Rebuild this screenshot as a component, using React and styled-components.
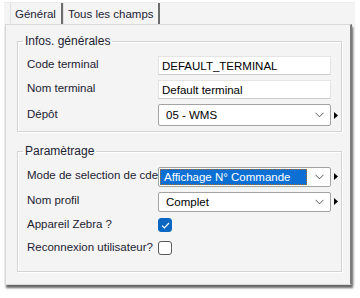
import React from 'react';
import styled, { createGlobalStyle } from 'styled-components';

const GlobalStyle = createGlobalStyle`
  html, body { margin: 0; padding: 0; background: #fff; }
  body { font-family: "Liberation Sans", Arial, sans-serif; font-size: 11.5px; }
`;

const Screen = styled.div`
  width: 360px;
  height: 298px;
  padding: 2px 0 0 4px;
  box-sizing: border-box;
  background: #fff;
`;

const Window = styled.div`
  width: 351px;
  height: 282px;
  background: #f4f4f4;
  border-top: 1px solid #ececec;
  display: flex;
  flex-direction: column;
`;

const TabStrip = styled.div`
  display: flex;
  height: 21px;
  padding-left: 6px;
`;

const Tab = styled.div`
  height: 21px;
  box-sizing: border-box;
  padding: 0 ${p => p.$pr}px 0 ${p => p.$pl}px;
  display: flex;
  align-items: center;
  color: #1c2233;
  border-left: 1px solid #e2e2e2;
  border-right: 2px solid #6c6c6c;
  background: #f4f4f4;
`;

const Page = styled.div`
  flex: 1;
  margin-left: 1px;
  width: 347px;
  box-sizing: border-box;
  border: 1px solid #dadada;
  border-right: 2px solid #7a7a7a;
  background: #f4f4f4;
  padding: 9px 0 0 11px;
  box-shadow: 1px 3px 2px rgba(0, 0, 0, 0.6);
  display: flex;
  flex-direction: column;
  gap: 12px;
`;

const Group = styled.fieldset`
  margin: 0;
  width: 325px;
  box-sizing: border-box;
  border: 1px solid #d4d4d4;
  box-shadow: inset 1px 1px 0 #fff, 1px 1px 0 #fff;
  padding: 6px 0 ${p => p.$pb}px 9px;
  display: flex;
  flex-direction: column;
`;

const Legend = styled.legend`
  margin-left: -4px;
  padding: 0 2px;
  font-size: 12px;
  line-height: 14px;
  color: #1c2233;
`;

const Row = styled.div`
  display: flex;
  align-items: center;
  height: ${p => p.$h}px;
`;

const Label = styled.div`
  width: 131px;
  flex: none;
  white-space: nowrap;
  overflow: hidden;
  color: #1c2233;
  margin-top: -3px;
`;

const TextInput = styled.div`
  width: 173px;
  height: 19px;
  box-sizing: border-box;
  background: #fff;
  border: 1px solid #e4e4e4;
  border-bottom-color: #cdcdcd;
  padding-left: 3px;
  display: flex;
  align-items: center;
  color: #000;
`;

const SelectBox = styled.div`
  width: 173px;
  height: ${p => p.$h}px;
  box-sizing: border-box;
  background: #fff;
  border: 1px solid #a3a3a3;
  border-radius: 2px;
  padding: 0 6px 0 1px;
  display: flex;
  align-items: center;
  justify-content: space-between;
  color: #000;
`;

const Value = styled.span`
  padding: 1px 3px;
  margin-left: 2px;
  border: 1px dotted transparent;
  ${p => p.$selected && `
    flex: 1;
    margin-left: 0;
    margin-right: 8px;
    background: #0b6fd4;
    color: #fff;
    border-color: #a86a2a;
  `}
`;

const Pointer = styled.div`
  width: 10px;
  display: flex;
  padding-left: 3px;
  box-sizing: border-box;
`;

const Check = styled.div`
  width: 14px;
  height: 14px;
  box-sizing: border-box;
  border-radius: 3px;
  display: flex;
  align-items: center;
  justify-content: center;
  background: ${p => (p.$on ? '#0a67c4' : '#fff')};
  border: 1px solid ${p => (p.$on ? '#0a67c4' : '#5a5a5a')};
`;

const Chevron = () => (
  <svg width="9" height="6" viewBox="0 0 9 6">
    <path d="M0.5 0.8 L4.5 4.8 L8.5 0.8" fill="none" stroke="#5a5a5a" strokeWidth="1" />
  </svg>
);

const Arrow = () => (
  <svg width="4" height="7" viewBox="0 0 4 7">
    <path d="M0 0 L4 3.5 L0 7 Z" fill="#000" />
  </svg>
);

const Select = ({ value, h = 21, selected }) => (
  <>
    <SelectBox $h={h}>
      <Value $selected={selected}>{value}</Value>
      <Chevron />
    </SelectBox>
    <Pointer><Arrow /></Pointer>
  </>
);

export default function App() {
  return (
    <Screen>
      <GlobalStyle />
      <Window>
        <TabStrip>
          <Tab $pl={4} $pr={5}>Général</Tab>
          <Tab $pl={4} $pr={4}>Tous les champs</Tab>
        </TabStrip>
        <Page>
          <Group $pb={3}>
            <Legend>Infos. générales</Legend>
            <Row $h={23}>
              <Label>Code terminal</Label>
              <TextInput>DEFAULT_TERMINAL</TextInput>
            </Row>
            <Row $h={25}>
              <Label>Nom terminal</Label>
              <TextInput>Default terminal</TextInput>
            </Row>
            <Row $h={26}>
              <Label>Dépôt</Label>
              <Select value="05 - WMS" h={22} />
            </Row>
          </Group>
          <Group $pb={11}>
            <Legend>Paramètrage</Legend>
            <Row $h={25}>
              <Label>Mode de selection de cde</Label>
              <Select value="Affichage N° Commande" h={20} selected />
            </Row>
            <Row $h={25}>
              <Label>Nom profil</Label>
              <Select value="Complet" h={20} />
            </Row>
            <Row $h={22}>
              <Label>Appareil Zebra ?</Label>
              <Check $on>
                <svg width="9" height="7" viewBox="0 0 9 7">
                  <path d="M1 3.6 L3.4 6 L8 1" fill="none" stroke="#fff" strokeWidth="1.2" />
                </svg>
              </Check>
            </Row>
            <Row $h={24}>
              <Label>Reconnexion utilisateur?</Label>
              <Check />
            </Row>
          </Group>
        </Page>
      </Window>
    </Screen>
  );
}
